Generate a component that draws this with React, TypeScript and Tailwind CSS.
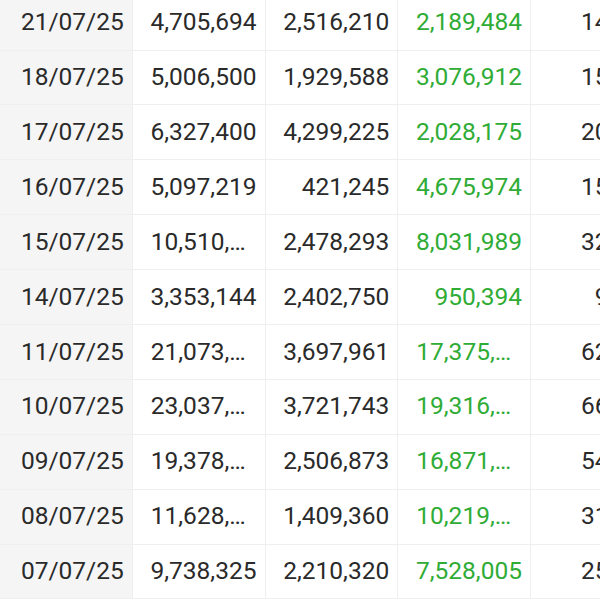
const rows = [
  ["21/07/25", "4,705,694", "2,516,210", "2,189,484", "14,117"],
  ["18/07/25", "5,006,500", "1,929,588", "3,076,912", "15,019"],
  ["17/07/25", "6,327,400", "4,299,225", "2,028,175", "20,247"],
  ["16/07/25", "5,097,219", "421,245", "4,675,974", "15,291"],
  ["15/07/25", "10,510,282", "2,478,293", "8,031,989", "32,160"],
  ["14/07/25", "3,353,144", "2,402,750", "950,394", "9,863"],
  ["11/07/25", "21,073,373", "3,697,961", "17,375,412", "62,219"],
  ["10/07/25", "23,037,863", "3,721,743", "19,316,120", "66,810"],
  ["09/07/25", "19,378,373", "2,506,873", "16,871,500", "54,262"],
  ["08/07/25", "11,628,360", "1,409,360", "10,219,000", "31,396"],
  ["07/07/25", "9,738,325", "2,210,320", "7,528,005", "25,320"],
];

export default function App() {
  return (
    <div
      className="h-[600px] w-[600px] overflow-hidden bg-white text-[24.5px] text-[#2a2a2a]"
      style={{ fontFamily: "Roboto, 'Noto Sans', sans-serif" }}
    >
      <div className="-mt-[4.4px] grid w-[664px] grid-cols-[repeat(5,132.75px)]">
        {rows.map((row) =>
          row.map((cell, i) => {
            // values too long for the cell get cut with an ellipsis
            const long = cell.length > 9;
            return (
              <div
                key={row[0] + i}
                className={
                  "flex h-[54.9px] items-center border-b border-r border-[#efefef] pr-2 " +
                  (long ? "pl-[18px] " : "pl-[15px] ") +
                  (i === 0 ? "bg-[#f5f5f5]" : "bg-white")
                }
              >
                <span
                  className={
                    "block w-full truncate text-right " +
                    (i === 3 ? "text-[#2fac35]" : "")
                  }
                >
                  {cell}
                </span>
              </div>
            );
          })
        )}
      </div>
    </div>
  );
}
